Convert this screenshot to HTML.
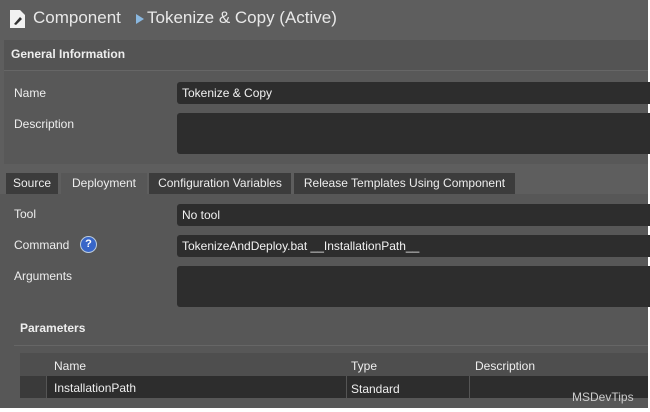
<!DOCTYPE html>
<html><head><style>
body{margin:0;width:650px;height:412px;background:#fff;font-family:"Liberation Sans",sans-serif;overflow:hidden;position:relative}
.a{position:absolute}
.t{color:#eee;font-size:12px}
.in{position:absolute;left:177px;right:0;background:#2d2d2d;border-radius:3px 0 0 3px;color:#f2f2f2;font-size:12px;padding-left:5px;box-sizing:border-box}
</style></head><body>
<div class="a" style="left:0;top:0;width:648px;height:408px;background:#5e5e5e"></div>
<svg class="a" style="left:9px;top:9px" width="17" height="20"><path d="M1 1h10l5 5v13H1z" fill="#f2f2f2"/><path d="M5 15l6-7 2 2-6 6z" fill="#333"/></svg>
<div class="a" style="left:33px;top:8px;color:#e8e8e8;font-size:17px">Component</div>
<div class="a" style="left:136px;top:14px;width:0;height:0;border-left:8px solid #8ab8e0;border-top:5px solid transparent;border-bottom:5px solid transparent"></div>
<div class="a" style="left:147px;top:8px;color:#e8e8e8;font-size:17px">Tokenize &amp; Copy (Active)</div>
<div class="a" style="left:4px;top:40px;width:644px;height:124px;background:#585858"></div>
<div class="a" style="left:4px;top:40px;width:644px;height:30px;background:#545454;border-bottom:1px solid #666"></div>
<div class="a t" style="left:11px;top:47px;font-weight:bold">General Information</div>
<div class="a t" style="left:14px;top:86px">Name</div>
<div class="in" style="top:82px;height:22px;line-height:22px">Tokenize &amp; Copy</div>
<div class="a t" style="left:14px;top:117px">Description</div>
<div class="in" style="top:113px;height:41px"></div>
<div class="a" style="left:0;top:194px;width:648px;height:214px;background:#575757"></div>
<div class="a t" style="left:6px;top:173px;width:52px;height:21px;background:#3c3c3c;line-height:21px;text-align:center">Source</div>
<div class="a t" style="left:61px;top:173px;width:86px;height:21px;background:#575757;line-height:21px;text-align:center">Deployment</div>
<div class="a t" style="left:149px;top:173px;width:142px;height:21px;background:#3c3c3c;line-height:21px;text-align:center">Configuration Variables</div>
<div class="a t" style="left:294px;top:173px;width:221px;height:21px;background:#3c3c3c;line-height:21px;text-align:center">Release Templates Using Component</div>
<div class="a t" style="left:14px;top:207px">Tool</div>
<div class="in" style="top:204px;height:22px;line-height:22px">No tool</div>
<div class="a t" style="left:14px;top:238px">Command</div>
<div class="a" style="left:80px;top:236px;width:15px;height:15px;border-radius:50%;background:#3866c8;border:1px solid #bcd;color:#fff;font-size:11px;font-weight:bold;text-align:center;line-height:15px">?</div>
<div class="in" style="top:235px;height:22px;line-height:22px">TokenizeAndDeploy.bat __InstallationPath__</div>
<div class="a t" style="left:14px;top:269px">Arguments</div>
<div class="in" style="top:266px;height:41px"></div>
<div class="a t" style="left:20px;top:321px;font-weight:bold">Parameters</div>
<div class="a" style="left:14px;top:345px;width:634px;height:1px;background:#666"></div>
<div class="a" style="left:20px;top:353px;width:628px;height:23px;background:#4e4e4e"></div>
<div class="a t" style="left:54px;top:359px">Name</div>
<div class="a t" style="left:351px;top:359px">Type</div>
<div class="a t" style="left:475px;top:359px">Description</div>
<div class="a" style="left:20px;top:376px;width:628px;height:22px;background:#2d2d2d"></div>
<div class="a" style="left:20px;top:376px;width:26px;height:22px;background:#3a3a3a"></div>
<div class="a" style="left:46px;top:376px;width:1px;height:22px;background:#555"></div>
<div class="a" style="left:346px;top:376px;width:1px;height:22px;background:#555"></div>
<div class="a" style="left:469px;top:376px;width:1px;height:22px;background:#555"></div>
<div class="a t" style="left:54px;top:381px">InstallationPath</div>
<div class="a t" style="left:351px;top:382px">Standard</div>
<div class="a" style="left:572px;top:390px;color:#ccc;font-size:12px">MSDevTips</div>
</body></html>
